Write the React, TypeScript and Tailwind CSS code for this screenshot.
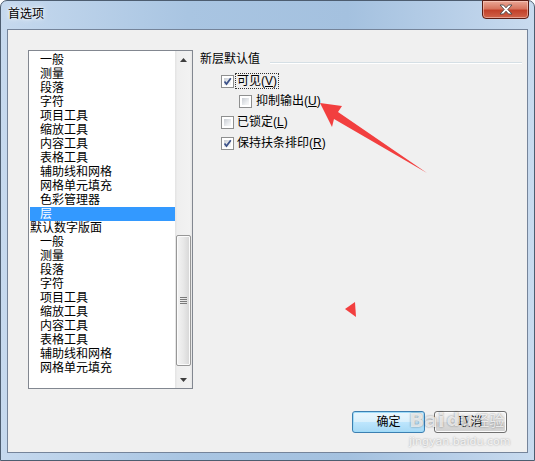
const listItems: { t: string; child: boolean; sel?: boolean }[] = [
  { t: '一般', child: true },
  { t: '测量', child: true },
  { t: '段落', child: true },
  { t: '字符', child: true },
  { t: '项目工具', child: true },
  { t: '缩放工具', child: true },
  { t: '内容工具', child: true },
  { t: '表格工具', child: true },
  { t: '辅助线和网格', child: true },
  { t: '网格单元填充', child: true },
  { t: '色彩管理器', child: true },
  { t: '层', child: true, sel: true },
  { t: '默认数字版面', child: false },
  { t: '一般', child: true },
  { t: '测量', child: true },
  { t: '段落', child: true },
  { t: '字符', child: true },
  { t: '项目工具', child: true },
  { t: '缩放工具', child: true },
  { t: '内容工具', child: true },
  { t: '表格工具', child: true },
  { t: '辅助线和网格', child: true },
  { t: '网格单元填充', child: true },
]

function CheckBox({ checked }: { checked?: boolean }) {
  return (
    <div className='relative w-[13px] h-[13px] shrink-0 border border-[#8e8f8f] bg-white p-[2px]'>
      <div className='w-full h-full bg-[linear-gradient(135deg,#c9cdd3,#eef0f2_70%,#f8f8f8)]' />
      {checked && (
        <svg className='absolute left-0 top-0' width='11' height='11' viewBox='0 0 11 11'>
          <path d='M2.5 5.5 L4.5 8 L8.8 2.2' fill='none' stroke='#3b5189' strokeWidth='1.7' />
        </svg>
      )}
    </div>
  )
}

function Label({ text, mn }: { text: string; mn: string }) {
  return (
    <span className='whitespace-nowrap'>
      {text}(<span className='underline underline-offset-1'>{mn}</span>)
    </span>
  )
}

function WinButton({ label, def }: { label: string; def?: boolean }) {
  return (
    <div
      className={
        def
          ? 'w-[73px] h-[22px] flex items-center justify-center rounded-[3px] border border-[#3c7fb1] shadow-[inset_0_0_0_1px_#9fdcf9] bg-[linear-gradient(#eaf6fd,#d9f0fc_50%,#bee6fd_50%,#a7d9f5)] text-[12px]'
          : 'w-[73px] h-[22px] flex items-center justify-center rounded-[3px] border border-[#707070] shadow-[inset_0_0_0_1px_#fcfcfc] bg-[linear-gradient(#f2f2f2,#ebebeb_50%,#dddddd_50%,#cfcfcf)] text-[12px]'
      }
    >
      {label}
    </div>
  )
}

export default function App() {
  return (
    <div className="relative w-[535px] h-[461px] overflow-hidden font-['Liberation_Sans','Noto_Sans_CJK_SC',sans-serif] text-black">
      <div className='w-[535px] h-[461px] rounded-t-[7px] border border-[#4d5d70] bg-[linear-gradient(to_right,#c6d9ee,#a9c5e2_35%,#a4c1df_65%,#b8cfe8_85%,#c9dbef)] flex flex-col'>
        {/* title bar */}
        <div className='h-[28px] flex items-start justify-between'>
          <div className='pl-[7px] pt-[6px] text-[12px] leading-[14px] [text-shadow:0_0_6px_#ffffff,0_0_3px_#ffffff]'>首选项</div>
          <div className='mr-[5px] w-[47px] h-[19px] -mt-px rounded-b-[4px] border border-[#5a1d14] bg-[linear-gradient(#eaa896,#d7755f_45%,#c2412a_55%,#d0634a)] shadow-[inset_0_0_0_1px_rgba(255,220,210,0.5)] flex items-center justify-center'>
            <svg width='14' height='11' viewBox='0 0 14 11'>
              <path
                d='M1 1 H4.5 L7 3.8 L9.5 1 H13 L8.8 5.5 L13 10 H9.5 L7 7.2 L4.5 10 H1 L5.2 5.5 Z'
                fill='#ffffff'
                stroke='#4a4a4a'
                strokeWidth='0.9'
                strokeLinejoin='round'
              />
            </svg>
          </div>
        </div>

        {/* client area */}
        <div className='ml-[6px] w-[521px] h-[424px] border border-[#75849a] bg-[#f0f0f0] flex flex-col'>
          <div className='flex items-start'>
            {/* list box */}
            <div className='ml-[20px] mt-[20px] w-[165px] h-[339px] border border-[#828790] bg-white flex'>
              <div className='flex-1 pt-[2px] text-[12px] leading-[14px]'>
                {listItems.map((it, i) => (
                  <div
                    key={i}
                    className={
                      (it.sel ? 'bg-[#3399ff] text-white ' : '') +
                      (it.child ? 'ml-px pl-[10px] h-[14px] whitespace-nowrap' : 'ml-px pl-0 h-[14px] whitespace-nowrap')
                    }
                  >
                    {it.t}
                  </div>
                ))}
              </div>
              {/* scrollbar */}
              <div className='w-[17px] h-full flex flex-col bg-[linear-gradient(to_right,#e3e3e3,#efefef_15%,#f2f2f2_85%,#e6e6e6)]'>
                <div className='h-[17px] flex items-center justify-center'>
                  <svg width='7' height='4' viewBox='0 0 7 4'>
                    <path d='M0 4 L3.5 0 L7 4 Z' fill='#3e3e3e' />
                  </svg>
                </div>
                <div className='flex-1 flex flex-col'>
                  <div className='h-[167px]' />
                  <div className='mx-px h-[131px] rounded-[2px] border border-[#979797] bg-[linear-gradient(to_right,#f4f4f4,#e8e8e8_50%,#d6d6d6)] shadow-[inset_0_0_0_1px_#fbfbfb] flex flex-col items-center justify-center gap-px'>
                    <div className='w-[7px] h-px bg-[#7a7a7a]' />
                    <div className='w-[7px] h-px bg-[#7a7a7a]' />
                    <div className='w-[7px] h-px bg-[#7a7a7a]' />
                    <div className='w-[7px] h-px bg-[#7a7a7a]' />
                  </div>
                </div>
                <div className='h-[17px] flex items-center justify-center'>
                  <svg width='7' height='4' viewBox='0 0 7 4'>
                    <path d='M0 0 L3.5 4 L7 0 Z' fill='#3e3e3e' />
                  </svg>
                </div>
              </div>
            </div>

            {/* right panel */}
            <div className='ml-[7px] mt-[22px] w-[322px] text-[12px] leading-[14px]'>
              <div className='flex items-start'>
                <span className='whitespace-nowrap'>新层默认值</span>
                <div className='flex-1 ml-[10px] mt-[10px] h-[2px] border-t border-[#d5dfe5] border-b border-b-white' />
              </div>

              <div className='mt-[7px] ml-[21px] h-[16px] flex items-center'>
                <CheckBox checked />
                <span className='ml-[2px] px-px outline outline-dotted outline-1 outline-[#333]'>
                  <Label text='可见' mn='V' />
                </span>
              </div>
              <div className='mt-[4px] ml-[39px] h-[16px] flex items-center'>
                <CheckBox />
                <span className='ml-[4px]'>
                  <Label text='抑制输出' mn='U' />
                </span>
              </div>
              <div className='mt-[5px] ml-[21px] h-[16px] flex items-center'>
                <CheckBox />
                <span className='ml-[3px]'>
                  <Label text='已锁定' mn='L' />
                </span>
              </div>
              <div className='mt-[5px] ml-[21px] h-[16px] flex items-center'>
                <CheckBox checked />
                <span className='ml-[3px]'>
                  <Label text='保持扶条排印' mn='R' />
                </span>
              </div>
            </div>
          </div>

          {/* buttons */}
          <div className='mt-[22px] pr-[20px] flex justify-end gap-[9px]'>
            <WinButton label='确定' def />
            <WinButton label='取消' />
          </div>
        </div>
      </div>

      {/* red annotation arrows */}
      <svg className='absolute left-0 top-0 pointer-events-none' width='535' height='461' viewBox='0 0 535 461'>
        <polygon points='320,103 342,106 338,112 427,173 334,119 332,127' fill='#f23f3f' />
        <polygon points='345,309 355,302 356,317' fill='#f23f3f' />
      </svg>

      {/* watermark */}
      <div className='absolute left-[409px] top-[408px] pointer-events-none flex flex-col items-start'>
        <div className="flex items-center font-['DejaVu_Sans',sans-serif] font-bold text-[20px] leading-[24px] text-white/75 [text-shadow:0_0_2px_rgba(0,0,0,0.45)]">
          <span>Bai</span>
          <span className='ml-[2px] text-[18px]'>du</span>
          <span className="ml-[2px] font-['Noto_Sans_CJK_SC',sans-serif] text-[15px] font-normal">经验</span>
        </div>
        <div className="mt-[4px] font-['DejaVu_Sans',sans-serif] text-[11px] leading-[12px] text-white/80 [text-shadow:0_0_2px_rgba(0,0,0,0.4)]">
          jingyan.baidu.com
        </div>
      </div>
    </div>
  )
}
